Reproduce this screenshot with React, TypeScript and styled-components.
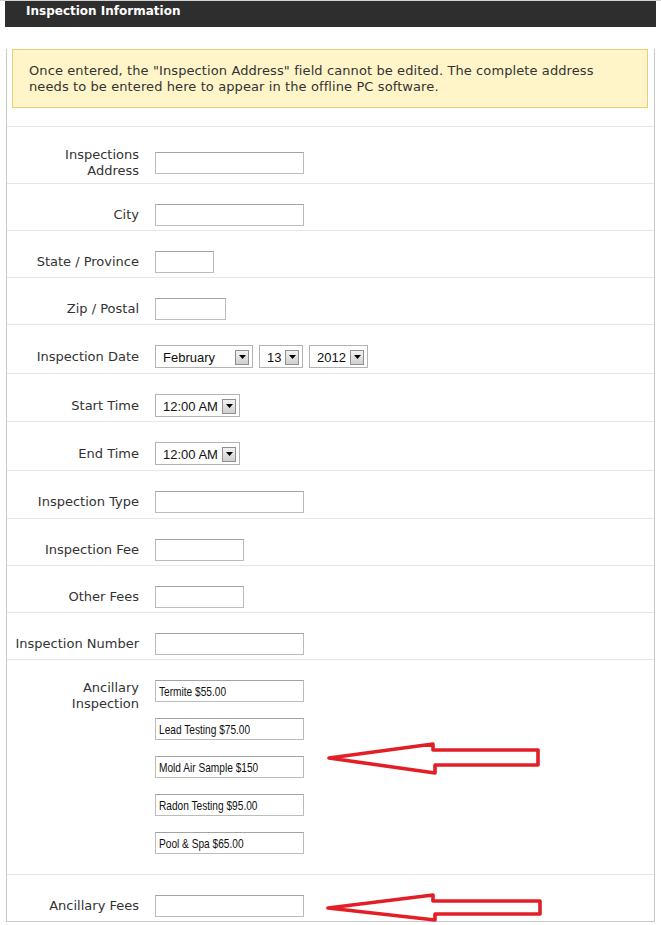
import React from "react";
import styled, { createGlobalStyle } from "styled-components";

const Global = createGlobalStyle`
  html, body { margin: 0; padding: 0; background: #ffffff; }
  body { font-family: "DejaVu Sans", Verdana, sans-serif; color: #333; }
`;

const Page = styled.div`
  border-top: 1px solid #d4d4d4;
  padding: 0 5px;
  width: 651px;
`;

const Header = styled.div`
  background: #2e2e2e;
  color: #ffffff;
  font-family: "DejaVu Sans", Verdana, sans-serif;
  font-weight: bold;
  font-size: 12px;
  line-height: 16px;
  padding: 2px 0 8px 21px;
`;

const Panel = styled.div`
  margin: 0 1px;
  border: 1px solid #c9c9c9;
  border-top: none;
`;

const Notice = styled.div`
  margin: 22px 6px 18px 5px;
  background: #fff5c9;
  border: 1px solid #e6cf78;
  padding: 13px 16px 12px 16px;
  font-size: 13px;
  letter-spacing: 0.1px;
  line-height: 16px;
  color: #333;
`;

const Row = styled.div<{ $top?: boolean; $padBottom?: number }>`
  display: grid;
  grid-template-columns: 132px 1fr;
  column-gap: 16px;
  align-items: ${(p) => (p.$top ? "start" : "center")};
  border-top: 1px solid #e6e6e6;
  padding: 20px 0 ${(p) => p.$padBottom ?? 4}px 0;
`;

const Label = styled.div`
  text-align: right;
  font-size: 13px;
  line-height: 16px;
  color: #333;
`;

const Field = styled.div<{ $stack?: boolean }>`
  position: relative;
  display: flex;
  flex-direction: ${(p) => (p.$stack ? "column" : "row")};
  gap: ${(p) => (p.$stack ? "16px" : "6px")};
  align-items: flex-start;
`;

const TextBox = styled.div<{ $w: number }>`
  box-sizing: border-box;
  width: ${(p) => p.$w}px;
  height: 22px;
  border: 1px solid #bcbcbc;
  border-top-color: #a3a3a3;
  background: #fff;
  padding: 0 3px;
  font-family: "Liberation Sans", Arial, sans-serif;
  font-size: 13px;
  line-height: 21px;
  color: #111;
  white-space: nowrap;
  overflow: hidden;
`;

const Condensed = styled.span`
  display: inline-block;
  transform: scaleX(0.78);
  transform-origin: left center;
`;

const SelectBox = styled.div<{ $w: number }>`
  box-sizing: border-box;
  width: ${(p) => p.$w}px;
  height: 23px;
  border: 1px solid #b3b3b3;
  background: #fff;
  display: flex;
  align-items: center;
  justify-content: space-between;
  padding: 0 3px 0 7px;
  font-family: "Liberation Sans", Arial, sans-serif;
  font-size: 13px;
  color: #111;
`;

const SelectText = styled.span`
  line-height: 16px;
  padding-top: 2px;
`;

const DropBtn = styled.span`
  box-sizing: border-box;
  width: 14px;
  height: 15px;
  border: 1px solid #8f8f8f;
  background: linear-gradient(#f2f2f2, #cfcfcf);
  display: flex;
  align-items: center;
  justify-content: center;
  margin-top: 1px;
`;

const Arrow = styled.svg<{ $top: number; $left: number }>`
  position: absolute;
  top: ${(p) => p.$top}px;
  left: ${(p) => p.$left}px;
  overflow: visible;
  pointer-events: none;
`;

const Select = ({ w, value }: { w: number; value: string }) => (
  <SelectBox $w={w}>
    <SelectText>{value}</SelectText>
    <DropBtn>
      <svg width="7" height="4" viewBox="0 0 7 4">
        <path d="M0 0 L7 0 L3.5 4 Z" fill="#000" />
      </svg>
    </DropBtn>
  </SelectBox>
);

const RedArrow = ({
  top,
  left,
  pts,
  w,
  h,
}: {
  top: number;
  left: number;
  pts: string;
  w: number;
  h: number;
}) => (
  <Arrow $top={top} $left={left} width={w} height={h} viewBox={`0 0 ${w} ${h}`}>
    <polygon
      points={pts}
      fill="none"
      stroke="#e21f26"
      strokeWidth={3.6}
      strokeLinejoin="round"
    />
  </Arrow>
);

const ancillary = [
  "Termite $55.00",
  "Lead Testing $75.00",
  "Mold Air Sample $150",
  "Radon Testing $95.00",
  "Pool & Spa $65.00",
];

export default function App() {
  return (
    <>
      <Global />
      <Page>
        <Header>Inspection Information</Header>
        <Panel>
          <Notice>
            Once entered, the "Inspection Address" field cannot be edited. The complete address
            needs to be entered here to appear in the offline PC software.
          </Notice>

          <Row $padBottom={4}>
            <Label>
              Inspections
              <br />
              Address
            </Label>
            <Field>
              <TextBox $w={149} />
            </Field>
          </Row>
          <Row>
            <Label>City</Label>
            <Field>
              <TextBox $w={149} />
            </Field>
          </Row>
          <Row>
            <Label>State / Province</Label>
            <Field>
              <TextBox $w={59} />
            </Field>
          </Row>
          <Row>
            <Label>Zip / Postal</Label>
            <Field>
              <TextBox $w={71} />
            </Field>
          </Row>
          <Row $padBottom={5}>
            <Label>Inspection Date</Label>
            <Field>
              <Select w={98} value="February" />
              <Select w={44} value="13" />
              <Select w={59} value="2012" />
            </Field>
          </Row>
          <Row>
            <Label>Start Time</Label>
            <Field>
              <Select w={85} value="12:00 AM" />
            </Field>
          </Row>
          <Row $padBottom={5}>
            <Label>End Time</Label>
            <Field>
              <Select w={85} value="12:00 AM" />
            </Field>
          </Row>
          <Row $padBottom={5}>
            <Label>Inspection Type</Label>
            <Field>
              <TextBox $w={149} />
            </Field>
          </Row>
          <Row>
            <Label>Inspection Fee</Label>
            <Field>
              <TextBox $w={89} />
            </Field>
          </Row>
          <Row>
            <Label>Other Fees</Label>
            <Field>
              <TextBox $w={89} />
            </Field>
          </Row>
          <Row>
            <Label>Inspection Number</Label>
            <Field>
              <TextBox $w={149} />
            </Field>
          </Row>
          <Row $top $padBottom={20}>
            <Label>
              Ancillary
              <br />
              Inspection
            </Label>
            <Field $stack>
              {ancillary.map((a) => (
                <TextBox key={a} $w={149}>
                  <Condensed>{a}</Condensed>
                </TextBox>
              ))}
              <RedArrow
                top={60}
                left={171}
                w={216}
                h={38}
                pts="3,18 107,4 107,10 212,10 212,25 109,25 109,33"
              />
            </Field>
          </Row>
          <Row>
            <Label>Ancillary Fees</Label>
            <Field>
              <TextBox $w={149} />
              <RedArrow
                top={-2}
                left={171}
                w={218}
                h={30}
                pts="2,15 107,2 107,8 214,8 214,21 109,21 109,27"
              />
            </Field>
          </Row>
        </Panel>
      </Page>
    </>
  );
}
